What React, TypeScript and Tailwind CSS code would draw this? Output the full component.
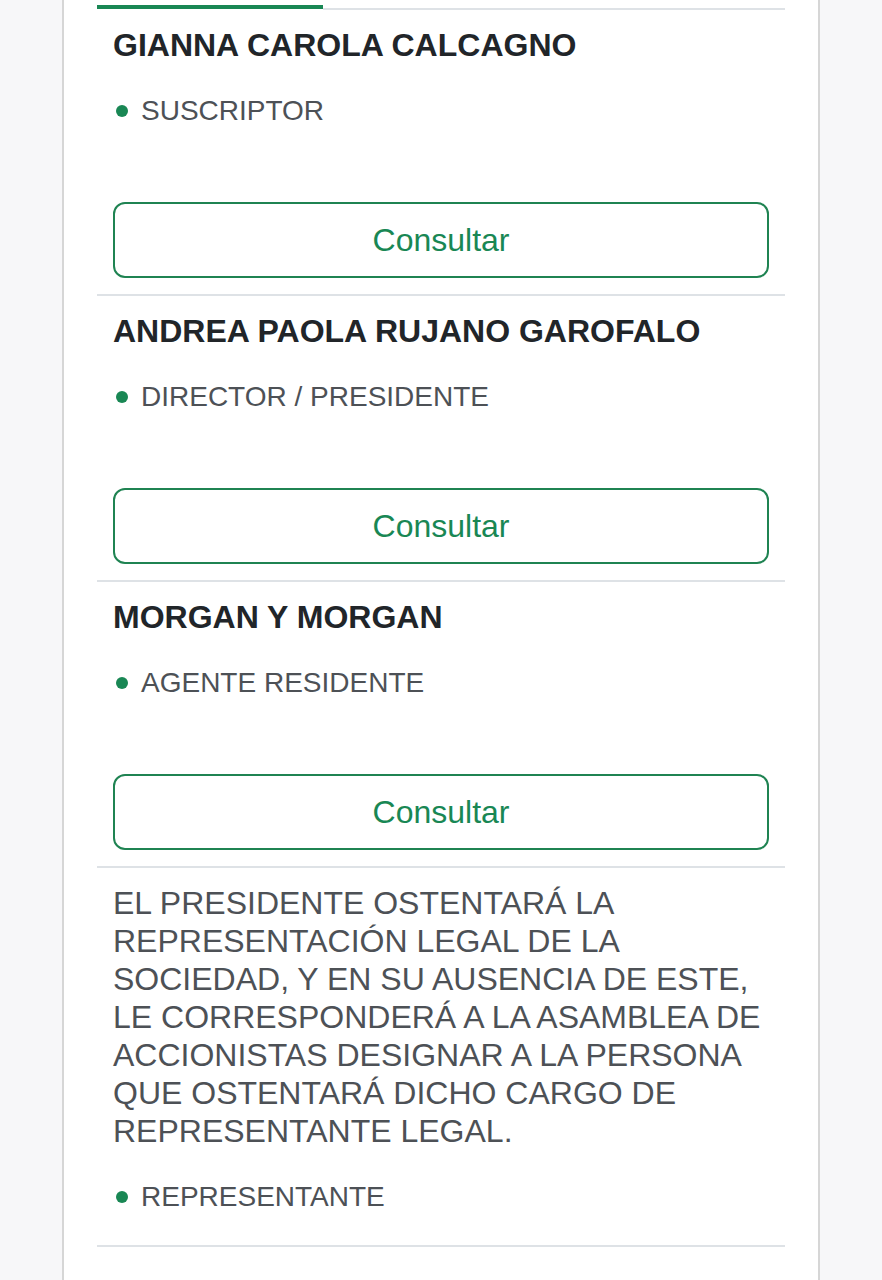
import React from "react";

const font = { fontFamily: '"Liberation Sans", Arial, sans-serif' };

function Role({ label }: { label: string }) {
  return (
    <div className="flex items-center h-[34px] text-[28px] leading-[34px] text-[#4d5156]">
      <span className="w-[12px] h-[12px] rounded-full bg-[#198754] ml-[3px] mr-[13px] shrink-0" />
      <span>{label}</span>
    </div>
  );
}

function Person({ name, role }: { name: string; role: string }) {
  return (
    <div className="px-[16px] pt-[16px] pb-[16px] border-b-2 border-[#dee2e6]">
      <div className="text-[32px] leading-[38px] font-bold text-[#212529]">{name}</div>
      <div className="mt-[30px]">
        <Role label={role} />
      </div>
      <button className="mt-[74px] w-full h-[76px] border-2 border-[#1f8352] rounded-[12px] text-[#198754] text-[32px] bg-white flex items-center justify-center">
        Consultar
      </button>
    </div>
  );
}

export default function App() {
  return (
    <div className="min-h-[1280px] bg-[#f7f7f9] flex justify-start" style={font}>
      <div className="ml-[62px] w-[758px] min-h-[1280px] bg-white border-x-2 border-[#d6d6d6] px-[33px]">
        <div className="flex items-start pt-[5px] h-[10px]">
          <div className="w-[226px] h-[4px] bg-[#198754]" />
          <div className="flex-1 h-[2px] mt-[3px] bg-[#dee2e6]" />
        </div>
        <Person name="GIANNA CAROLA CALCAGNO" role="SUSCRIPTOR" />
        <Person name="ANDREA PAOLA RUJANO GAROFALO" role="DIRECTOR / PRESIDENTE" />
        <Person name="MORGAN Y MORGAN" role="AGENTE RESIDENTE" />
        <div className="px-[16px] pt-[16px] pb-[31px] border-b-2 border-[#dee2e6]">
          <p className="text-[32px] leading-[38px] text-[#4d5156]">
            EL PRESIDENTE OSTENTARÁ LA REPRESENTACIÓN LEGAL DE LA SOCIEDAD, Y EN SU AUSENCIA DE ESTE, LE CORRESPONDERÁ A LA ASAMBLEA DE ACCIONISTAS DESIGNAR A LA PERSONA QUE OSTENTARÁ DICHO CARGO DE REPRESENTANTE LEGAL.
          </p>
          <div className="mt-[30px]">
            <Role label="REPRESENTANTE" />
          </div>
        </div>
      </div>
    </div>
  );
}
